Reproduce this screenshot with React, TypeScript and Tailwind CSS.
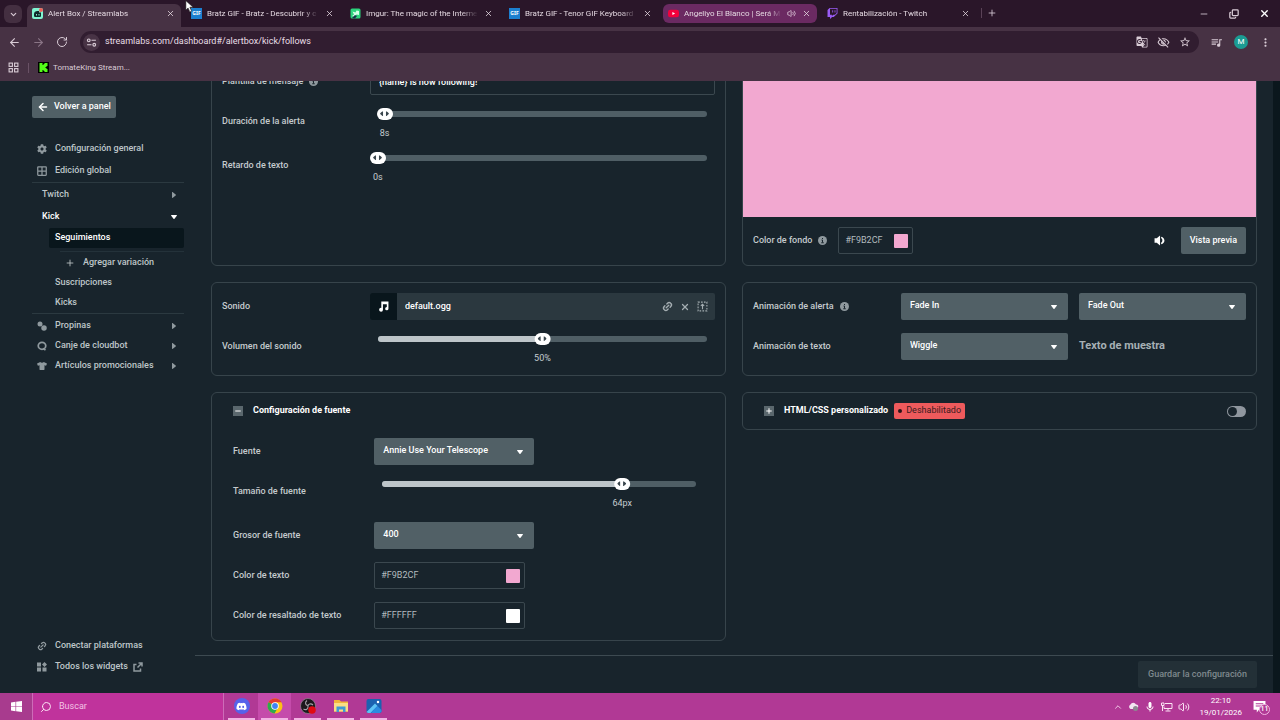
import { useId, useState } from 'react';
import type { ReactNode } from 'react';
import {
  ArrowLeft,
  ArrowRight,
  ChevronDown,
  ChevronUp,
  Copy,
  Link2,
  Minus,
  Plus,
  RotateCw,
  Search,
  Volume2,
  X,
} from 'lucide-react';
import { FaCog, FaDiscord, FaTshirt, FaTwitch } from 'react-icons/fa';
import { SiKick } from 'react-icons/si';
import {
  MdGTranslate,
  MdMic,
  MdMoreVert,
  MdOutlineVisibilityOff,
  MdQueueMusic,
  MdStarBorder,
} from 'react-icons/md';

/* ---------- Browser chrome ---------- */

function GifIcon() {
  return (
    <span className="flex size-[11px] items-center justify-center bg-[#1c7fd0] font-['Noto_Sans',sans-serif] text-[5px] font-bold text-white">
      GIF
    </span>
  );
}

function StreamlabsIcon() {
  return (
    <svg viewBox="0 0 22 22" className="size-[11px]">
      <rect width="22" height="22" rx="4" fill="#80f5d2" />
      <path d="M4 12c0-4 3-6 7-6h3v3h4v6c0 2-1 3-3 3H7c-2 0-3-1-3-3z" fill="#0e2a2b" />
      <path d="M9 12v3M14 12v3" stroke="#80f5d2" strokeWidth="2" />
      <circle cx="18" cy="4" r="4" fill="#f0605a" />
    </svg>
  );
}

function ImgurIcon() {
  return (
    <svg viewBox="0 0 22 22" className="size-[11px]">
      <rect x="1" y="1" width="20" height="20" rx="3" fill="#2bd47d" />
      <path d="M4 16l4-3-3-6 6 2 2-4 5 1v8l-5-1-3 5z" fill="#d5ffe8" />
      <path d="M4 20l6-6 4 2-4 5z" fill="#14334a" />
    </svg>
  );
}

function YoutubeIcon() {
  return (
    <svg viewBox="0 0 24 22" className="size-[11px]">
      <rect y="3" width="24" height="16" rx="5" fill="#f3003c" />
      <path d="M9.500 7.500v7l6-3.500z" fill="#fff" />
    </svg>
  );
}

interface Tab {
  title: string;
  icon: ReactNode;
  state?: 'active' | 'playing';
}

const tabs: Tab[] = [
  { title: 'Alert Box / Streamlabs', icon: <StreamlabsIcon />, state: 'active' },
  { title: 'Bratz GIF - Bratz - Descubrir y c', icon: <GifIcon /> },
  { title: 'Imgur: The magic of the Interne', icon: <ImgurIcon /> },
  { title: 'Bratz GIF - Tenor GIF Keyboard', icon: <GifIcon /> },
  { title: 'Angeliyo El Blanco | Será M', icon: <YoutubeIcon />, state: 'playing' },
  { title: 'Rentabilización - Twitch', icon: <FaTwitch className="size-[11px] text-[#9a5cf5]" /> },
];

function BrowserTab({ tab }: { tab: Tab }) {
  const look =
    tab.state === 'active'
      ? 'h-[23px] rounded-t-md bg-[#473244] pb-1'
      : tab.state === 'playing'
        ? 'mb-[4px] h-[19px] rounded-md bg-[#6b2a62]'
        : 'mb-[4px] h-[19px]';
  return (
    <div className={`flex w-[154px] items-center gap-[5px] pr-[6px] pl-[5px] ${look}`}>
      {tab.icon}
      <span className="min-w-0 flex-1 mask-r-from-85% text-[8px] whitespace-nowrap text-[#e4d8e1]">
        {tab.title}
      </span>
      {tab.state === 'playing' && <Volume2 className="size-[9px] text-[#e8d5e4]" />}
      <button aria-label="Cerrar pestaña" className="ml-px">
        <X className="size-[9px] text-[#ede2ea]" />
      </button>
    </div>
  );
}

function BrowserBar() {
  return (
    <header className="shrink-0 bg-[#473244] font-[Roboto,sans-serif] text-[#d9ccd6]">
      <div className="flex h-[27px] items-end gap-[5px] bg-[#2a1629] pl-1">
        <button
          aria-label="Buscar pestañas"
          className="mb-[4px] flex size-[18px] items-center justify-center rounded-md bg-[#442f41]"
        >
          <ChevronDown className="size-[9px]" strokeWidth={3} />
        </button>
        {tabs.map((tab, i) => (
          <BrowserTab key={i} tab={tab} />
        ))}
        <button aria-label="Nueva pestaña" className="mb-[9px] border-l border-[#5a4257] pl-[5px]">
          <Plus className="size-[10px]" />
        </button>
        <div className="mb-[8px] ml-auto flex gap-5 pr-[10px]">
          <button aria-label="Minimizar">
            <Minus className="size-[10px]" />
          </button>
          <button aria-label="Restaurar">
            <Copy className="size-[10px] -scale-x-100 rotate-180" strokeWidth={3} />
          </button>
          <button aria-label="Cerrar">
            <X className="size-[11px] text-white" strokeWidth={3} />
          </button>
        </div>
      </div>

      <div className="flex h-[30px] items-center pr-2 pl-2">
        <button aria-label="Atrás" className="w-6">
          <ArrowLeft className="size-[13px]" />
        </button>
        <button aria-label="Adelante" className="w-6">
          <ArrowRight className="size-[13px] text-[#8a7586]" />
        </button>
        <button aria-label="Recargar" className="w-6">
          <RotateCw className="size-[12px]" />
        </button>
        <div className="flex h-[22px] flex-1 items-center gap-[5px] rounded-full bg-[#311d30] pr-2 pl-[3px]">
          <span className="flex size-[17px] items-center justify-center rounded-full bg-[#483345]">
            <svg viewBox="0 0 20 20" className="size-[11px]" fill="none" stroke="currentColor" strokeWidth="2">
              <circle cx="5" cy="6" r="2.500" />
              <path d="M10 6h8M2 14h8" />
              <circle cx="15" cy="14" r="2.500" />
            </svg>
          </span>
          <input
            aria-label="Dirección"
            className="min-w-0 flex-1 text-[9px] text-[#e9dfe7] outline-none"
            defaultValue="streamlabs.com/dashboard#/alertbox/kick/follows"
          />
          <div className="flex gap-[9px]">
            <MdGTranslate className="size-[12px]" />
            <MdOutlineVisibilityOff className="size-[13px]" />
            <MdStarBorder className="size-[12px]" />
          </div>
        </div>
        <div className="flex items-center gap-[11px] pl-[11px]">
          <MdQueueMusic className="size-[13px]" />
          <span className="flex size-[14px] items-center justify-center rounded-full bg-[#1b9c93] text-[8px] text-white">
            M
          </span>
          <MdMoreVert className="size-[13px]" />
        </div>
      </div>

      <div className="flex h-6 items-center pb-[3px] pl-2">
        <svg viewBox="0 0 20 20" className="size-[11px]" fill="none" stroke="currentColor" strokeWidth="2">
          <rect x="2" y="2" width="6" height="6" />
          <rect x="12" y="2" width="6" height="6" />
          <rect x="2" y="12" width="6" height="6" />
          <rect x="12" y="12" width="6" height="6" />
        </svg>
        <span className="mx-[9px] h-[10px] w-px bg-[#6a5266]" />
        <a href="#marcador" className="flex items-center gap-1 text-[8px]">
          <span className="flex size-[11px] items-center justify-center bg-black text-[#53fc18]">
            <SiKick className="size-[9px]" />
          </span>
          TomateKing Stream...
        </a>
      </div>
    </header>
  );
}

/* ---------- Shared controls ---------- */

function Caret({ className = '' }: { className?: string }) {
  return (
    <svg viewBox="0 0 12 8" className={className} fill="currentColor">
      <path d="M1 0h10c1 0 1.200 1 .6 1.700L7 7.300a1.300 1.300 0 0 1-2 0L.4 1.700C-.2 1 0 0 1 0z" />
    </svg>
  );
}

function InfoIcon() {
  return (
    <svg viewBox="0 0 18 18" className="size-[9px]">
      <circle cx="9" cy="9" r="9" fill="#8f999e" />
      <path d="M9 4v2M7 8h2v5M6.500 13.500h5" stroke="#18242c" strokeWidth="2" fill="none" />
    </svg>
  );
}

function Select({ id, label, value, className }: { id?: string; label?: string; value: string; className: string }) {
  return (
    <div className={`relative ${className}`}>
      <select
        id={id}
        aria-label={label}
        defaultValue={value}
        className="block h-[27px] w-full appearance-none rounded-xs bg-[#516066] pr-6 pb-[2px] pl-[9px] text-[9px] font-medium text-white"
      >
        <option>{value}</option>
      </select>
      <Caret className="pointer-events-none absolute top-[12px] right-[11px] w-[6px] text-white" />
    </div>
  );
}

interface SliderProps {
  id: string;
  min: number;
  max: number;
  initial: number;
  unit: string;
}

function Slider({ id, min, max, initial, unit }: SliderProps) {
  const [value, setValue] = useState(initial);
  const percent = ((value - min) / (max - min)) * 100;

  return (
    <div className="h-[27px] flex-1 px-2">
      <div className="relative flex h-3 items-center">
        <div className="h-[6px] w-full overflow-hidden rounded-full bg-[#4f5e65]">
          <div className="h-full bg-[#bdc5c9]" style={{ width: `${percent}%` }} />
        </div>
        <div
          className="absolute top-0 flex -translate-x-1/2 flex-col items-center gap-[7px]"
          style={{ left: `${percent}%` }}
        >
          <span className="flex h-3 w-4 items-center justify-center gap-px rounded-full bg-white text-[#3a464d]">
            <Caret className="w-[5px] rotate-90" />
            <Caret className="w-[5px] -rotate-90" />
          </span>
          <output htmlFor={id} className="text-[9px] leading-3 text-[#c5ccd0]">
            {value}
            {unit}
          </output>
        </div>
        <input
          id={id}
          type="range"
          min={min}
          max={max}
          value={value}
          onChange={(e) => setValue(Number(e.target.value))}
          className="absolute inset-0 w-full cursor-pointer opacity-0"
        />
      </div>
    </div>
  );
}

function ColorField({ id, color, className }: { id: string; color: string; className: string }) {
  return (
    <div className={`flex h-[27px] items-center rounded-xs border border-[#3b484f] pr-1 pl-[6px] ${className}`}>
      <input
        id={id}
        defaultValue={color}
        className="min-w-0 flex-1 text-[9px] text-[#b3bbbf] outline-none"
      />
      <span className="size-[14px] rounded-[1px]" style={{ backgroundColor: color === '#F9B2CF' ? '#f2a8d0' : color }} />
    </div>
  );
}

function Panel({ children, className = '' }: { children: ReactNode; className?: string }) {
  return <section className={`rounded-md border border-[#37444b] ${className}`}>{children}</section>;
}

interface RowProps {
  label: string;
  info?: boolean;
  tall?: boolean;
  children: (id: string) => ReactNode;
}

function Row({ label, info, tall, children }: RowProps) {
  const id = useId();
  return (
    <div className={`flex items-center last:mb-0 ${tall ? 'mb-[17px]' : 'mb-[13px]'}`}>
      <div className="flex w-[30%] shrink-0 items-center gap-[6px]">
        <label htmlFor={id} className="text-[9px] font-medium text-[#c5cbce]">
          {label}
        </label>
        {info && <InfoIcon />}
      </div>
      <div className="flex min-w-0 flex-1">{children(id)}</div>
    </div>
  );
}

function SectionHeader({ title, open, children }: { title: string; open?: boolean; children?: ReactNode }) {
  return (
    <div className="flex h-9 items-center">
      <button className="flex items-center gap-[10px] text-[9px] font-bold text-white">
        <span className="flex size-[10px] items-center justify-center bg-[#5a676d]">
          {open ? <Minus className="size-2" strokeWidth={3} /> : <Plus className="size-2" strokeWidth={3} />}
        </span>
        {title}
      </button>
      {children}
    </div>
  );
}

/* ---------- Sidebar ---------- */

function CoinsIcon() {
  return (
    <svg viewBox="0 0 20 20" className="size-[10px]" fill="currentColor">
      <circle cx="6" cy="6" r="5" />
      <circle cx="14" cy="14" r="5.500" />
    </svg>
  );
}

function GridIcon() {
  return (
    <svg viewBox="0 0 20 20" className="size-[10px]" fill="none" stroke="currentColor" strokeWidth="2.500">
      <rect x="1.500" y="1.500" width="17" height="17" rx="1" />
      <path d="M10 2v16M2 10h16" />
    </svg>
  );
}

function CloudbotIcon() {
  return (
    <svg viewBox="0 0 20 20" className="size-[10px]" fill="none" stroke="currentColor" strokeWidth="3.500">
      <ellipse cx="10" cy="9.500" rx="7.500" ry="7" />
      <path d="M12 15l5 3" />
    </svg>
  );
}

function WidgetsIcon() {
  return (
    <svg viewBox="0 0 20 20" className="size-[10px]" fill="currentColor">
      <path d="M0 1h8v8H0zM0 11h8v8H0zM11 11h8v8h-8zM15 0l5 5-5 5-5-5z" />
    </svg>
  );
}

function ExternalIcon() {
  return (
    <svg viewBox="0 0 20 20" className="size-[10px]" fill="none" stroke="currentColor" strokeWidth="3">
      <path d="M7 5H2v13h13v-5M11 2h7v7M18 2l-9 9" />
    </svg>
  );
}

function ChainIcon({ className = 'size-[10px]' }: { className?: string }) {
  return <Link2 className={`-rotate-45 ${className}`} strokeWidth={3} />;
}

interface NavItemProps {
  icon?: ReactNode;
  label: string;
  arrow?: boolean;
  after?: ReactNode;
  className?: string;
}

function NavItem({ icon, label, arrow, after, className = 'h-5' }: NavItemProps) {
  return (
    <a href="#seccion" className={`flex items-center pr-[7px] pl-[5px] ${className}`}>
      {icon && <span className="w-[18px] shrink-0 text-[#8f999e]">{icon}</span>}
      {label}
      {after && <span className="ml-[5px] text-[#8f999e]">{after}</span>}
      {arrow && <Caret className="ml-auto w-[6px] -rotate-90 text-[#8f999e]" />}
    </a>
  );
}

function Sidebar() {
  return (
    <aside className="flex w-[195px] shrink-0 flex-col pt-[15px] pr-[11px] pb-4 pl-8 text-[9px] font-medium text-[#bfc6c9]">
      <button className="flex h-[22px] items-center gap-[5px] self-start rounded-xs bg-[#516066] px-[5px] text-white">
        <ArrowLeft className="size-[12px]" strokeWidth={3} />
        Volver a panel
      </button>
      <nav className="mt-5 flex flex-col">
        <NavItem className="h-[22px]" icon={<FaCog className="size-[10px]" />} label="Configuración general" />
        <NavItem className="h-[22px]" icon={<GridIcon />} label="Edición global" />
        <hr className="mb-px border-[#2b3940]" />
        <a href="#twitch" className="flex h-[22px] items-center justify-between pr-[7px] pl-[10px]">
          Twitch
          <Caret className="w-[6px] -rotate-90 text-[#8f999e]" />
        </a>
        <a href="#kick" className="flex h-[22px] items-center justify-between pr-[7px] pl-[10px] text-white">
          Kick
          <Caret className="w-[6px]" />
        </a>
        <a
          href="#seguimientos"
          className="ml-[17px] flex h-5 items-center rounded-xs bg-[#09161c] pl-[6px] text-white"
        >
          Seguimientos
        </a>
        <hr className="mt-[3px] mb-px ml-7 border-[#24323a]" />
        <a href="#agregar" className="flex h-5 items-center gap-2 pl-[33px]">
          <Plus className="size-[10px]" />
          Agregar variación
        </a>
        <a href="#suscripciones" className="flex h-5 items-center pl-[23px]">
          Suscripciones
        </a>
        <a href="#kicks" className="flex h-5 items-center pl-[23px]">
          Kicks
        </a>
        <hr className="mb-[2px] border-[#2b3940]" />
        <NavItem icon={<CoinsIcon />} label="Propinas" arrow />
        <NavItem icon={<CloudbotIcon />} label="Canje de cloudbot" arrow />
        <NavItem icon={<FaTshirt className="size-[10px]" />} label="Artículos promocionales" arrow />
      </nav>
      <div className="mt-auto">
        <NavItem className="h-[21px]" icon={<ChainIcon />} label="Conectar plataformas" />
        <NavItem className="h-[21px]" icon={<WidgetsIcon />} label="Todos los widgets" after={<ExternalIcon />} />
      </div>
    </aside>
  );
}

/* ---------- Alert settings ---------- */

function MessagePanel() {
  return (
    <Panel className="min-h-[209px] px-[10px] pt-[10px]">
      <Row label="Plantilla de mensaje" info>
        {(id) => (
          <input
            id={id}
            defaultValue="{name} is now following!"
            className="h-[27px] w-full rounded-xs border border-[#3b484f] px-2 text-[9px] font-medium text-white outline-none"
          />
        )}
      </Row>
      <Row label="Duración de la alerta" tall>
        {(id) => <Slider id={id} min={2} max={300} initial={8} unit="s" />}
      </Row>
      <Row label="Retardo de texto" tall>
        {(id) => <Slider id={id} min={0} max={60} initial={0} unit="s" />}
      </Row>
    </Panel>
  );
}

function SpeakerIcon() {
  return (
    <svg viewBox="0 0 20 20" className="size-[11px] text-white" fill="currentColor">
      <path d="M1 6h4l6-5v18l-6-5H1zM13 3c4 1 6 4 6 7s-2 6-6 7v-3c3-1 3-7 0-8z" />
    </svg>
  );
}

function PreviewPanel() {
  return (
    <Panel className="flex flex-col">
      <div className="flex-1 bg-[#f2a8d0]" />
      <div className="flex items-center px-[10px] pt-[10px] pb-[11px]">
        <label htmlFor="fondo" className="mr-[6px] text-[9px] font-medium text-[#c5cbce]">
          Color de fondo
        </label>
        <InfoIcon />
        <ColorField id="fondo" color="#F9B2CF" className="ml-[11px] w-[75px]" />
        <button aria-label="Silenciar" className="mr-4 ml-auto">
          <SpeakerIcon />
        </button>
        <button className="h-[27px] rounded-xs bg-[#516066] px-[9px] text-[9px] font-medium text-white">
          Vista previa
        </button>
      </div>
    </Panel>
  );
}

function UploadIcon() {
  return (
    <svg viewBox="0 0 20 20" className="size-[11px]" fill="none" stroke="currentColor" strokeWidth="2">
      <rect x="2" y="2" width="16" height="16" strokeDasharray="3 2.300" />
      <path d="M10 15V6M7 9l3-3 3 3" />
    </svg>
  );
}

function SoundPanel() {
  return (
    <Panel className="px-[10px] pt-[10px] pb-[15px]">
      <Row label="Sonido">
        {(id) => (
          <div className="flex h-[27px] w-full items-center rounded-xs bg-[#2b383f] text-[#a4adb1]">
            <span className="flex h-full w-[27px] items-center justify-center rounded-l-xs bg-[#09161c] text-white">
              <svg viewBox="0 0 20 20" className="size-[11px]" fill="currentColor">
                <path d="M6 1h13v13a3 3 0 1 1-3-3V6H9v10a3.500 3.500 0 1 1-3-3.500z" />
              </svg>
            </span>
            <input
              id={id}
              readOnly
              value="default.ogg"
              className="min-w-0 flex-1 px-2 text-[9px] font-medium text-white outline-none"
            />
            <div className="flex items-center gap-[7px] pr-[7px]">
              <button aria-label="Enlace">
                <ChainIcon className="size-[11px]" />
              </button>
              <button aria-label="Quitar">
                <X className="size-[10px]" strokeWidth={3} />
              </button>
              <button aria-label="Subir">
                <UploadIcon />
              </button>
            </div>
          </div>
        )}
      </Row>
      <Row label="Volumen del sonido" tall>
        {(id) => <Slider id={id} min={0} max={100} initial={50} unit="%" />}
      </Row>
    </Panel>
  );
}

function AnimationPanel() {
  return (
    <Panel className="px-[10px] pt-[10px]">
      <Row label="Animación de alerta" info>
        {(id) => (
          <div className="flex w-full gap-[11px]">
            <Select id={id} value="Fade In" className="flex-1" />
            <Select label="Animación de salida" value="Fade Out" className="flex-1" />
          </div>
        )}
      </Row>
      <Row label="Animación de texto">
        {(id) => (
          <div className="flex w-full items-center gap-[11px]">
            <Select id={id} value="Wiggle" className="flex-1" />
            <span className="flex-1 text-[11px] font-bold text-[#a6b0b4]">Texto de muestra</span>
          </div>
        )}
      </Row>
    </Panel>
  );
}

function FontPanel() {
  return (
    <Panel className="px-[21px] pb-[11px]">
      <SectionHeader title="Configuración de fuente" open />
      <div className="pt-[9px]">
        <Row label="Fuente">{(id) => <Select id={id} value="Annie Use Your Telescope" className="w-40" />}</Row>
        <Row label="Tamaño de fuente" tall>
          {(id) => <Slider id={id} min={12} max={80} initial={64} unit="px" />}
        </Row>
        <Row label="Grosor de fuente">{(id) => <Select id={id} value="400" className="w-40" />}</Row>
        <Row label="Color de texto">{(id) => <ColorField id={id} color="#F9B2CF" className="w-[151px]" />}</Row>
        <Row label="Color de resaltado de texto">
          {(id) => <ColorField id={id} color="#FFFFFF" className="w-[151px]" />}
        </Row>
      </div>
    </Panel>
  );
}

function CustomCodePanel() {
  return (
    <Panel className="self-start pr-[10px] pl-[21px]">
      <SectionHeader title="HTML/CSS personalizado">
        <span className="ml-[6px] flex h-4 items-center gap-1 rounded-xs bg-[#ee5a5c] px-1 text-[9px] text-[#3a1a20]">
          <span className="size-1 rounded-full bg-[#2a1418]" />
          Deshabilitado
        </span>
        <label className="ml-auto flex h-[11px] w-[19px] cursor-pointer items-center rounded-full bg-[#8f969e] px-px has-checked:justify-end has-checked:bg-[#80f5d2]">
          <input type="checkbox" aria-label="HTML/CSS personalizado" className="sr-only" />
          <span className="size-[9px] rounded-full bg-[#18242c]" />
        </label>
      </SectionHeader>
    </Panel>
  );
}

/* ---------- Taskbar ---------- */

function ChromeIcon() {
  return (
    <svg viewBox="0 0 32 32" className="size-4">
      <circle cx="16" cy="16" r="15" fill="#fbc116" />
      <path d="M16 16L3 8.500A15 15 0 0 1 29 8.500H16z" fill="#e33b2e" />
      <path d="M3 8.500A15 15 0 0 0 15 31l7-12-6-3z" fill="#2da94f" />
      <circle cx="16" cy="16" r="7.500" fill="#fff" />
      <circle cx="16" cy="16" r="5.800" fill="#3f83f2" />
    </svg>
  );
}

function FolderIcon() {
  return (
    <svg viewBox="0 0 32 32" className="size-4">
      <path d="M2 4h11l3 3h14v20H2z" fill="#f2b63c" />
      <path d="M2 10h28v17H2z" fill="#fbdf84" />
      <path d="M7 17h18v11h-5v-5h-8v5H7z" fill="#3f9bd4" />
    </svg>
  );
}

function PhotosIcon() {
  return (
    <svg viewBox="0 0 32 32" className="size-4">
      <rect x="1" y="2" width="30" height="28" rx="4" fill="#1b62b0" />
      <path d="M1 28l17-17 5 5L9 30H4z" fill="#5cc3f5" />
      <path d="M14 25l9-9 8 8v3l-3 3H10z" fill="#2b8be0" />
      <circle cx="24" cy="8" r="2.500" fill="#fff" />
    </svg>
  );
}

function ObsIcon() {
  return (
    <svg viewBox="0 0 32 32" className="size-4">
      <circle cx="16" cy="16" r="15" fill="#1b181d" stroke="#8d8590" strokeWidth="1.500" />
      <g fill="none" stroke="#a7a2aa" strokeWidth="2.200">
        <path d="M14 5c-5 4-3 10 2 10" />
        <path d="M26 14c-4-4-10-2-10 2" />
        <path d="M7 22c5 3 10 0 9-6" />
      </g>
      <circle cx="24" cy="24" r="7.500" fill="#e00b12" />
    </svg>
  );
}

const apps = [
  {
    name: 'Discord',
    icon: (
      <span className="flex size-4 items-center justify-center rounded-full bg-[#5662ea]">
        <FaDiscord className="size-[11px] text-white" />
      </span>
    ),
  },
  { name: 'Chrome', icon: <ChromeIcon />, active: true },
  { name: 'OBS Studio', icon: <ObsIcon /> },
  { name: 'Explorador', icon: <FolderIcon /> },
  { name: 'Fotos', icon: <PhotosIcon /> },
];

function Taskbar() {
  return (
    <footer className="flex h-[27px] shrink-0 items-stretch bg-[#b13995] text-[#fbe3f4]">
      <button aria-label="Inicio" className="flex w-8 items-center justify-center bg-[#a83b8e]">
        <svg viewBox="0 0 22 22" className="size-[11px]" fill="#fff">
          <path d="M0 3l9-1.300V10.400H0zM10.300 1.500L22 0v10.400H10.300zM0 11.600h9v8.700L0 19zM10.300 11.600H22V22l-11.700-1.500z" />
        </svg>
      </button>
      <label className="flex w-[192px] items-center gap-[7px] border-x border-[#cd6cb8] bg-[#c0339c] pl-[7px]">
        <Search className="size-[12px] -scale-x-100" />
        <input
          aria-label="Buscar"
          placeholder="Buscar"
          className="min-w-0 flex-1 text-[9px] outline-none placeholder:text-[#f3c4e6]"
        />
      </label>
      <div className="ml-px flex">
        {apps.map((app) => (
          <button
            key={app.name}
            aria-label={app.name}
            className={`flex w-[33px] flex-col items-center justify-between px-[3px] pt-[5px] ${app.active ? 'bg-[#c54bab]' : ''}`}
          >
            {app.icon}
            <span className="h-[2px] w-full bg-[#f3b3e3]" />
          </button>
        ))}
      </div>
      <div className="ml-auto flex items-center gap-[5px] pr-[14px]">
        <ChevronUp className="size-[10px]" />
        <svg viewBox="0 0 22 20" className="size-[11px]">
          <path d="M5 15a5 5 0 0 1 0-9 6 6 0 0 1 11 0 4 4 0 0 1 4 6l-4 3z" fill="#f3e6f1" />
          <circle cx="15" cy="14" r="5" fill="#8d8790" />
        </svg>
        <MdMic className="size-[12px] text-white" />
        <svg viewBox="0 0 24 20" className="size-[12px]" fill="none" stroke="currentColor" strokeWidth="2">
          <path d="M8 3h14v10H6V9M14 13v4M9 18h10M1 2h5v5H1zM3 7v11" />
        </svg>
        <Volume2 className="size-[12px]" />
        <div className="mr-[6px] ml-1 text-center text-[8px] leading-[12px] whitespace-nowrap text-white">
          <div>22:10</div>
          <div>19/01/2026</div>
        </div>
        <span className="relative">
          <svg viewBox="0 0 24 24" className="size-[13px]">
            <path d="M1 2h22v16H11l-4 5v-5H1z" fill="#fff" />
            <path d="M5 7h14M5 11h14" stroke="#b13995" strokeWidth="2" />
          </svg>
          <span className="absolute top-1 left-[6px] flex size-[11px] items-center justify-center rounded-full border border-[#f3b3e3] bg-[#b13995] text-[7px] font-medium text-white">
            11
          </span>
        </span>
      </div>
    </footer>
  );
}

export default function App() {
  return (
    <div className="relative flex h-screen flex-col overflow-hidden bg-[#18242c] font-[Roboto,sans-serif]">
      <BrowserBar />
      <div className="flex min-h-0 flex-1">
        <Sidebar />
        <main className="flex min-w-0 flex-1 flex-col">
          <div className="min-h-0 flex-1 overflow-hidden px-4">
            <div className="-mt-6 grid grid-cols-2 gap-4">
              <MessagePanel />
              <PreviewPanel />
              <SoundPanel />
              <AnimationPanel />
              <FontPanel />
              <CustomCodePanel />
            </div>
          </div>
          <div className="flex h-[38px] shrink-0 items-center justify-end border-t border-[#3d4a51] pr-4">
            <button disabled className="h-[27px] rounded-xs bg-[#233037] px-[10px] text-[9px] font-medium text-[#7f898e]">
              Guardar la configuración
            </button>
          </div>
        </main>
        <div className="w-[7px] shrink-0 bg-[#0b171d]" />
      </div>
      <Taskbar />

      {/* Mouse pointer */}
      <svg viewBox="0 0 12 18" className="pointer-events-none absolute top-0 left-[185px] h-[13px] w-[9px]">
        <path d="M1 1v13l3-3 2.500 5.500 2.500-1-2.500-5.500H11z" fill="#fff" stroke="#222" strokeWidth=".8" />
      </svg>
    </div>
  );
}
